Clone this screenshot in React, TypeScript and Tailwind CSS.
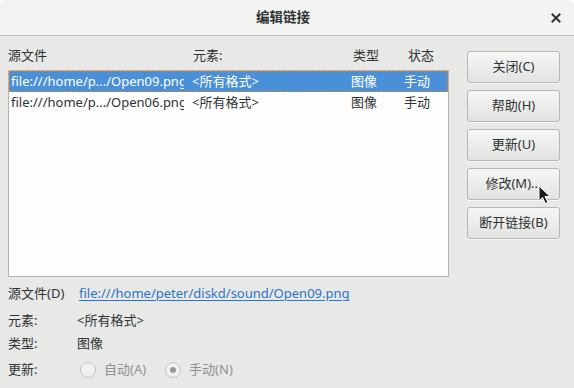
import React from 'react';

const rows = [
  { src: 'file:///home/p.../Open09.png', el: '<所有格式>', type: '图像', state: '手动', selected: true },
  { src: 'file:///home/p.../Open06.png', el: '<所有格式>', type: '图像', state: '手动', selected: false },
];

const buttons = ['关闭(C)', '帮助(H)', '更新(U)', '修改(M)...', '断开链接(B)'];

function Radio({ checked }: { checked?: boolean }) {
  return (
    <span className="w-[16px] h-[16px] rounded-full border border-[#c4c4c2] bg-[#f0f0ef] flex items-center justify-center">
      {checked && <span className="w-[6px] h-[6px] rounded-full bg-[#9a9a98]" />}
    </span>
  );
}

export default function App() {
  const font = { fontFamily: '"Noto Sans", "Noto Sans CJK SC", sans-serif' };
  return (
    <div className="w-[574px] h-[388px] bg-white relative overflow-hidden text-[13px] text-[#2e3436]" style={font}>
      <div className="w-full h-full bg-[#e8e8e7] rounded-t-[7px] flex flex-col">
        {/* title bar */}
        <div className="h-[36px] bg-[#f2f2f1] rounded-t-[7px] border-b border-[#bdbdba] grid grid-cols-[1fr_auto_1fr] items-center">
          <div />
          <div className="font-bold text-[13.5px] leading-none pr-[8px]">编辑链接</div>
          <div className="flex justify-end pr-[13px]">
            <svg width="10" height="10" viewBox="0 0 10 10">
              <path d="M1.5 1.5 L8.5 8.5 M8.5 1.5 L1.5 8.5" stroke="#2e3436" strokeWidth="2" strokeLinecap="square" />
            </svg>
          </div>
        </div>

        {/* main area */}
        <div className="flex px-[8px]">
          <div className="w-[441px] pt-[9px] flex flex-col">
            <div className="flex h-[20px] items-center leading-none">
              <span className="w-[185px]">源文件</span>
              <span className="w-[160px]">元素:</span>
              <span className="w-[55px]">类型</span>
              <span>状态</span>
            </div>
            <div className="mt-[5px] h-[207px] bg-[#fdfdfd] border border-[#b3b3b0]">
              {rows.map((r, i) => (
                <div
                  key={i}
                  className={
                    'h-[21px] flex items-center pl-[1px] whitespace-nowrap ' +
                    (r.selected ? 'bg-[#4a90d9] text-white border border-dashed border-[#c7813a]' : 'border border-transparent')
                  }
                >
                  <span className="w-[173px] mr-[8px] overflow-hidden">{r.src}</span>
                  <span className="w-[159px]">{r.el}</span>
                  <span className="w-[53px]">{r.type}</span>
                  <span>{r.state}</span>
                </div>
              ))}
            </div>
          </div>

          <div className="ml-[18px] w-[93px] pt-[15px] flex flex-col gap-[7px]">
            {buttons.map((b) => (
              <div
                key={b}
                className="h-[32px] rounded-[3px] border border-[#b6b6b3] bg-gradient-to-b from-[#f6f6f5] to-[#e2e2e0] shadow-[0_1px_0_rgba(255,255,255,0.6)] flex items-center justify-center"
              >
                {b}
              </div>
            ))}
          </div>
        </div>

        {/* info rows */}
        <div className="px-[8px] flex flex-col">
          <div className="mt-[7px] h-[20px] flex items-center">
            <span className="w-[71px]">源文件(D)</span>
            <span className="text-[#2a76c6] underline underline-offset-[2px]">file:///home/peter/diskd/sound/Open09.png</span>
          </div>
          <div className="mt-[7px] h-[20px] flex items-center">
            <span className="w-[69px]">元素:</span>
            <span>&lt;所有格式&gt;</span>
          </div>
          <div className="mt-[3px] h-[20px] flex items-center">
            <span className="w-[69px]">类型:</span>
            <span>图像</span>
          </div>
          <div className="mt-[6px] h-[20px] flex items-center">
            <span className="w-[72px]">更新:</span>
            <div className="flex items-center gap-[8px] text-[#8f928e]">
              <Radio />
              <span>自动(A)</span>
            </div>
            <div className="ml-[19px] flex items-center gap-[8px] text-[#8f928e]">
              <Radio checked />
              <span>手动(N)</span>
            </div>
          </div>
        </div>
      </div>

      {/* mouse pointer */}
      <svg className="absolute left-[538px] top-[185px]" width="14" height="20" viewBox="0 0 14 20">
        <path d="M1 1 L1 16 L4.5 12.5 L7.5 18.5 L10 17.3 L7 11.5 L12 11.5 Z" fill="#1a1a1a" stroke="#ffffff" strokeWidth="1" strokeLinejoin="round" />
      </svg>
    </div>
  );
}
